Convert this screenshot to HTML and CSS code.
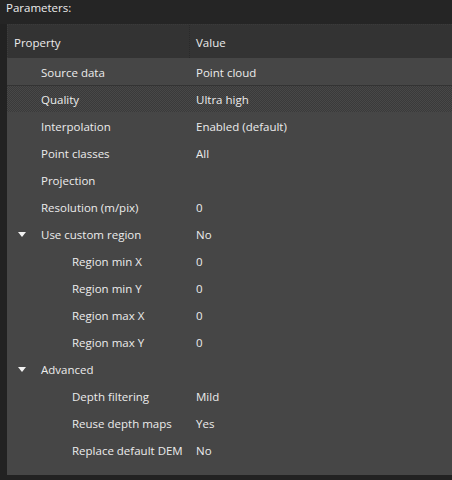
FILE: index.html
```html
<!DOCTYPE html>
<html>
<head>
<meta charset="utf-8">
<link rel="stylesheet" href="styles.css">
</head>
<body>
<div class="title">Parameters:</div>
<div class="table">
  <div class="header">
    <div class="hcell first">Property</div>
    <div class="hcell">Value</div>
  </div>
  <div class="row"><div class="name l1">Source data</div><div class="val">Point cloud</div></div>
  <div class="row focus"><div class="name l1">Quality</div><div class="val">Ultra high</div></div>
  <div class="row"><div class="name l1">Interpolation</div><div class="val">Enabled (default)</div></div>
  <div class="row"><div class="name l1">Point classes</div><div class="val">All</div></div>
  <div class="row"><div class="name l1">Projection</div><div class="val"></div></div>
  <div class="row"><div class="name l1">Resolution (m/pix)</div><div class="val">0</div></div>
  <div class="row"><div class="name l1"><svg class="tri" width="8" height="5" viewBox="0 0 8 5"><path d="M0 0H8L4 5Z" fill="#f2f2f2"/></svg>Use custom region</div><div class="val">No</div></div>
  <div class="row"><div class="name l2">Region min X</div><div class="val">0</div></div>
  <div class="row"><div class="name l2">Region min Y</div><div class="val">0</div></div>
  <div class="row"><div class="name l2">Region max X</div><div class="val">0</div></div>
  <div class="row"><div class="name l2">Region max Y</div><div class="val">0</div></div>
  <div class="row"><div class="name l1"><svg class="tri" width="8" height="5" viewBox="0 0 8 5"><path d="M0 0H8L4 5Z" fill="#f2f2f2"/></svg>Advanced</div><div class="val"></div></div>
  <div class="row"><div class="name l2">Depth filtering</div><div class="val">Mild</div></div>
  <div class="row"><div class="name l2">Reuse depth maps</div><div class="val">Yes</div></div>
  <div class="row"><div class="name l2">Replace default DEM</div><div class="val">No</div></div>
</div>
</body>
</html>
```
FILE: styles.css
```css
html, body {
  margin: 0;
  padding: 0;
  background: #222222;
  font-family: "Open Sans", "Noto Sans", sans-serif;
  font-size: 11.5px;
  color: #ececec;
}
.title {
  height: 24px;
  line-height: 16px;
  padding-left: 6px;
  background: #252525;
}
.table {
  margin-left: 7px;
  height: 451px;
  background: #464646;
}
.header {
  height: 34px;
  display: grid;
  grid-template-columns: 183px 1fr;
  background: #333333;
  border-top: 1px dotted #3a3a3a;
  box-sizing: border-box;
}
.hcell {
  display: flex;
  align-items: center;
  padding-left: 6px;
  padding-top: 1px;
}
.hcell.first {
  border-right: 1px dotted #2a2a2a;
  border-left: 1px dotted #3c3c3c;
}
.row {
  height: 27px;
  display: grid;
  grid-template-columns: 183px 1fr;
  align-items: center;
  box-sizing: border-box;
  padding-top: 2px;
}
.row.focus {
  background-color: #3e3e3e;
  background-image: repeating-conic-gradient(#484848 0% 25%, #3a3a3a 0% 50%);
  background-size: 2px 2px;
  border-top: 1px solid #333;
  padding-top: 1px;
}
.name {
  display: flex;
  align-items: center;
  white-space: nowrap;
}
.name.l1 { padding-left: 34px; }
.name.l2 { padding-left: 65px; }
.tri {
  margin-left: -23px;
  margin-right: 15px;
}
.val {
  padding-left: 6px;
  white-space: nowrap;
}
```
